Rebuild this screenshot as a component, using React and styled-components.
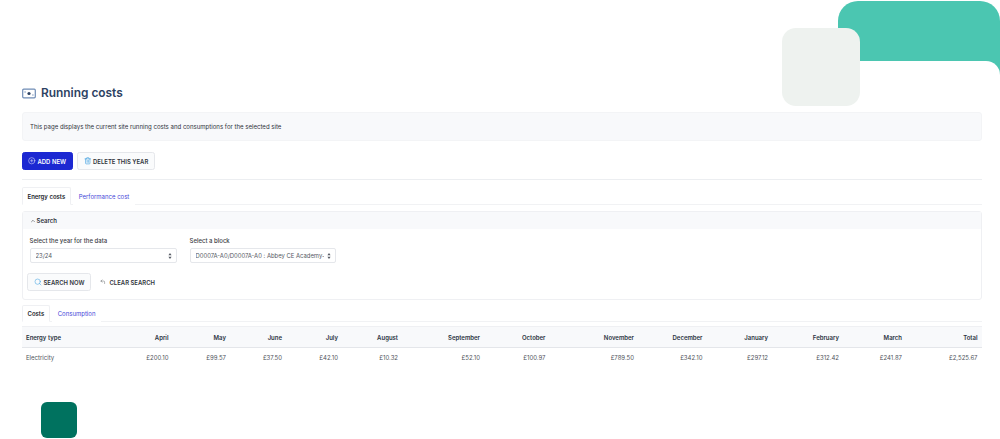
import React from "react";
import styled, { createGlobalStyle } from "styled-components";
import { CirclePlus, Trash2, Search as SearchIcon, ChevronUp, CornerUpLeft } from "lucide-react";

const Global = createGlobalStyle`
  html, body { margin: 0; padding: 0; background: #fff; height: 439px; overflow: hidden; }
  body { font-family: Inter, "Liberation Sans", sans-serif; color: #2c2f36; }
  * { box-sizing: border-box; }
`;

const Page = styled.div`
  position: relative;
  width: 1000px;
  height: 439px;
  overflow: hidden;
  background: #fff;
`;
const TealShape = styled.div`
  position: absolute;
  left: 838px;
  top: 1px;
  width: 162px;
  height: 90px;
  background: #4bc6b1;
  border-radius: 20px 20px 0 0;
`;
const GreySquare = styled.div`
  position: absolute;
  z-index: 2;
  left: 782px;
  top: 28px;
  width: 78px;
  height: 78px;
  background: #eef2ef;
  border-radius: 14px;
`;
const GreenSquare = styled.div`
  position: absolute;
  z-index: 2;
  left: 41px;
  top: 402px;
  width: 36px;
  height: 36px;
  background: #00725f;
  border-radius: 6px;
`;
const Main = styled.main`
  position: relative;
  z-index: 1;
  margin-top: 61px;
  height: 378px;
  background: #fff;
  border-top-right-radius: 14px;
  padding: 24px 18px 0 21.5px;
`;
const Content = styled.div`
  position: relative;
  z-index: 3;
`;
const Title = styled.h1`
  display: flex;
  align-items: center;
  gap: 5.5px;
  margin: 0;
  height: 16px;
  font-size: 11.9px;
  font-weight: 600;
  line-height: 16px;
  color: #2d4263;
`;
const Notice = styled.div`
  margin-top: 11px;
  height: 29px;
  padding: 0 7.5px;
  display: flex;
  align-items: center;
  background: #f8f9fb;
  border: 1px solid #f3f4f6;
  border-radius: 3px;
  font-size: 6.05px;
  color: #30343b;
`;
const Actions = styled.div`
  display: flex;
  align-items: center;
  gap: 4.5px;
  margin-top: ${p => p.$top || 11}px;
`;
const Button = styled.button`
  display: inline-flex;
  align-items: center;
  gap: 2px;
  height: 18px;
  padding: 0 5.5px;
  font-family: inherit;
  font-size: 5.9px;
  font-weight: 600;
  letter-spacing: 0.03px;
  color: ${p => (p.$primary ? "#fff" : "#30343b")};
  background: ${p => (p.$primary ? "#1c28d2" : p.$plain ? "transparent" : "#fafbfc")};
  border: 1px solid ${p => (p.$primary ? "#1c28d2" : p.$plain ? "transparent" : "#e5e7eb")};
  border-radius: 2.5px;
`;
const Divider = styled.hr`
  margin: 9px 0 0;
  border: 0;
  border-top: 1px solid #eceef1;
`;
const Tabs = styled.div`
  display: flex;
  gap: 1.5px;
  margin-top: ${p => p.$top}px;
  height: ${p => p.$height}px;
  border-bottom: 1px solid #f1f2f4;
`;
const Tab = styled.div`
  display: flex;
  align-items: center;
  padding: 0 5px;
  margin-bottom: -1px;
  font-size: 6px;
  font-weight: ${p => (p.$active ? 600 : 400)};
  color: ${p => (p.$active ? "#24272d" : "#3f47d8")};
  background: #fff;
  border: 1px solid ${p => (p.$active ? "#eff0f3" : "transparent")};
  border-bottom-color: ${p => (p.$active ? "#fff" : "transparent")};
  border-radius: 2px 2px 0 0;
`;
const Panel = styled.section`
  margin-top: 6px;
  height: 89px;
  border: 1px solid #eff0f3;
  border-radius: 3px;
`;
const PanelHead = styled.div`
  display: flex;
  align-items: center;
  gap: 1px;
  height: 17px;
  padding: 0 7px;
  background: #f8f9fb;
  font-size: 6px;
  font-weight: 600;
  color: #30343b;
`;
const Fields = styled.div`
  display: flex;
  gap: 13px;
  padding: 8px 7px 0 7px;
`;
const Field = styled.div`
  display: flex;
  flex-direction: column;
  gap: 3px;
  width: ${p => p.$width}px;
`;
const Label = styled.label`
  height: 8px;
  line-height: 8px;
  font-size: 6px;
  font-weight: 500;
  color: #3a3d44;
`;
const SelectBox = styled.div`
  display: flex;
  align-items: center;
  justify-content: space-between;
  height: 15px;
  padding: 0 4px 0 5px;
  border: 1px solid #e5e7eb;
  border-radius: 2px;
  font-size: 5.9px;
  color: #555a63;
  white-space: nowrap;
  overflow: hidden;
`;
const SelectText = styled.span`
  overflow: hidden;
  flex: 1;
  margin-right: 3px;
`;
const SearchActions = styled(Actions)`
  padding-left: 4.5px;
  gap: 3px;
`;
const Table = styled.div`
  margin-top: 4px;
  font-size: 6px;
`;
const Row = styled.div`
  display: grid;
  grid-template-columns: 100px 51.5px 57.5px 56px 56px 60px 82px 65.5px 88.5px 68.5px 65.5px 71px 63px 75.5px;
  align-items: center;
  height: ${p => (p.$head ? 22 : 19)}px;
  background: ${p => (p.$head ? "#f8f9fb" : "#fff")};
  border-top: ${p => (p.$head ? "1px solid #eff0f3" : "0")};
  border-bottom: ${p => (p.$head ? "1px solid #e4e6ea" : "0")};
  font-weight: ${p => (p.$head ? 600 : 400)};
  color: ${p => (p.$head ? "#2b3442" : "#50545c")};
`;
const Cell = styled.div`
  padding: 0 4.5px;
  white-space: nowrap;
  text-align: ${p => (p.$left ? "left" : "right")};
`;

const MoneyIcon = () => (
  <svg width="14" height="11" viewBox="0 0 14 11" fill="none">
    <rect x="0.7" y="1.2" width="12.6" height="8.6" rx="1" stroke="#6f8cb5" strokeWidth="1.2" />
    <circle cx="7" cy="5.5" r="1.6" fill="#2d4263" />
    <path d="M2.4 4h1.4M10.2 7h1.4" stroke="#6f8cb5" strokeWidth="1" />
  </svg>
);
const SelectArrows = () => (
  <svg width="4" height="6" viewBox="0 0 4 6" fill="#555a63">
    <path d="M2 0 L3.6 2.3 H0.4Z M2 6 L3.6 3.7 H0.4Z" />
  </svg>
);

const head = ["April","May","June","July","August","September","October","November","December","January","February","March","Total"];
const vals = ["£200.10","£99.57","£37.50","£42.10","£10.32","£52.10","£100.97","£789.50","£342.10","£297.12","£312.42","£241.87","£2,525.67"];

export default function App() {
  return (
    <Page>
      <Global />
      <TealShape />
      <GreySquare />
      <Main>
        <Content>
          <Title><MoneyIcon />Running costs</Title>
          <Notice>This page displays the current site running costs and consumptions for the selected site</Notice>
          <Actions>
            <Button $primary><CirclePlus size={7.5} strokeWidth={1.5} />ADD NEW</Button>
            <Button><Trash2 size={7.5} color="#3fa0e0" strokeWidth={2} />DELETE THIS YEAR</Button>
          </Actions>
          <Divider />
          <Tabs $top={7} $height={18}>
            <Tab $active>Energy costs</Tab>
            <Tab>Performance cost</Tab>
          </Tabs>
          <Panel>
            <PanelHead><ChevronUp size={6} strokeWidth={2} />Search</PanelHead>
            <Fields>
              <Field $width={147}>
                <Label>Select the year for the data</Label>
                <SelectBox><SelectText>23/24</SelectText><SelectArrows /></SelectBox>
              </Field>
              <Field $width={146}>
                <Label>Select a block</Label>
                <SelectBox><SelectText>D0007A-A0/D0007A-A0 : Abbey CE Academy-</SelectText><SelectArrows /></SelectBox>
              </Field>
            </Fields>
            <SearchActions $top={10}>
              <Button><SearchIcon size={8} color="#3fa0e0" strokeWidth={1.6} />SEARCH NOW</Button>
              <Button $plain><CornerUpLeft size={5.5} strokeWidth={1.6} />&nbsp;CLEAR SEARCH</Button>
            </SearchActions>
          </Panel>
          <Tabs $top={5} $height={17}>
            <Tab $active>Costs</Tab>
            <Tab>Consumption</Tab>
          </Tabs>
          <Table>
            <Row $head>
              <Cell $left>Energy type</Cell>
              {head.map(h => <Cell key={h}>{h}</Cell>)}
            </Row>
            <Row>
              <Cell $left>Electricity</Cell>
              {vals.map((v, i) => <Cell key={i}>{v}</Cell>)}
            </Row>
          </Table>
        </Content>
      </Main>
      <GreenSquare />
    </Page>
  );
}
